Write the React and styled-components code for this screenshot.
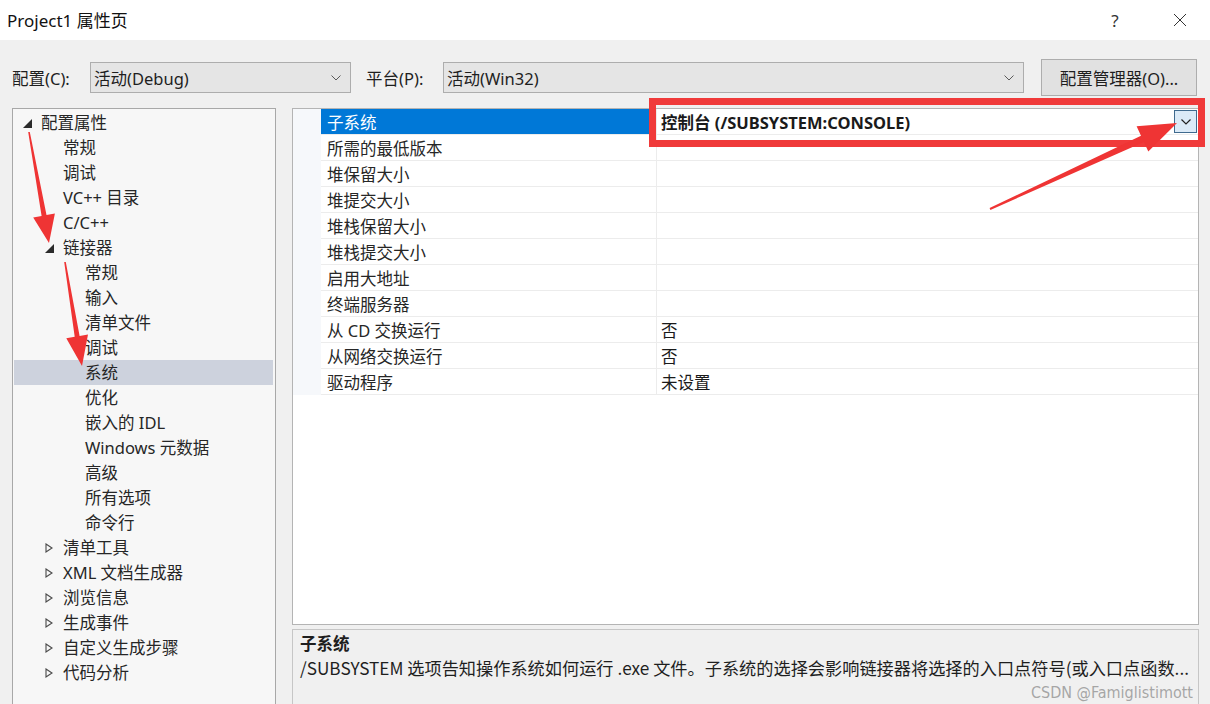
import React from 'react';
import styled, { createGlobalStyle } from 'styled-components';

const GlobalStyle = createGlobalStyle`
  html, body { margin: 0; padding: 0; background: #f0f0f0; }
  body {
    font-family: "Noto Sans", "Noto Sans CJK SC", sans-serif;
    color: #1e1e1e;
  }
  * { box-sizing: border-box; }
`;

const treeItems = [
  { label: '配置属性', level: 0, expander: 'open' },
  { label: '常规', level: 1 },
  { label: '调试', level: 1 },
  { label: 'VC++ 目录', level: 1 },
  { label: 'C/C++', level: 1 },
  { label: '链接器', level: 1, expander: 'open' },
  { label: '常规', level: 2 },
  { label: '输入', level: 2 },
  { label: '清单文件', level: 2 },
  { label: '调试', level: 2 },
  { label: '系统', level: 2, selected: true },
  { label: '优化', level: 2 },
  { label: '嵌入的 IDL', level: 2 },
  { label: 'Windows 元数据', level: 2 },
  { label: '高级', level: 2 },
  { label: '所有选项', level: 2 },
  { label: '命令行', level: 2 },
  { label: '清单工具', level: 1, expander: 'closed' },
  { label: 'XML 文档生成器', level: 1, expander: 'closed' },
  { label: '浏览信息', level: 1, expander: 'closed' },
  { label: '生成事件', level: 1, expander: 'closed' },
  { label: '自定义生成步骤', level: 1, expander: 'closed' },
  { label: '代码分析', level: 1, expander: 'closed' },
];

const props = [
  { name: '子系统', value: '控制台 (/SUBSYSTEM:CONSOLE)', selected: true },
  { name: '所需的最低版本', value: '' },
  { name: '堆保留大小', value: '' },
  { name: '堆提交大小', value: '' },
  { name: '堆栈保留大小', value: '' },
  { name: '堆栈提交大小', value: '' },
  { name: '启用大地址', value: '' },
  { name: '终端服务器', value: '' },
  { name: '从 CD 交换运行', value: '否' },
  { name: '从网络交换运行', value: '否' },
  { name: '驱动程序', value: '未设置' },
];

// red annotation arrows: tail -> tip
function arrowPoints([tx, ty], [px, py], headLen, headHalf, tailHalf, neckHalf) {
  const dx = px - tx, dy = py - ty;
  const len = Math.hypot(dx, dy);
  const ux = dx / len, uy = dy / len;
  const nx = -uy, ny = ux;
  const bx = px - ux * headLen, by = py - uy * headLen;
  const pts = [
    [tx + nx * tailHalf, ty + ny * tailHalf],
    [bx + nx * neckHalf, by + ny * neckHalf],
    [bx + nx * headHalf, by + ny * headHalf],
    [px, py],
    [bx - nx * headHalf, by - ny * headHalf],
    [bx - nx * neckHalf, by - ny * neckHalf],
    [tx - nx * tailHalf, ty - ny * tailHalf],
  ];
  return pts.map(p => p.map(v => v.toFixed(1)).join(',')).join(' ');
}

const arrows = [
  arrowPoints([29, 132], [49, 243], 28, 11, 0.8, 2.5),
  arrowPoints([65, 262], [82, 366], 30, 11, 0.8, 2.5),
  arrowPoints([990, 209], [1177, 123], 38, 14, 1, 3.5),
];

const Chevron = () => (
  <svg width="10" height="6" viewBox="0 0 10 6">
    <polyline points="0.5,0.5 5,5 9.5,0.5" fill="none" stroke="#5a5a5a" strokeWidth="1" />
  </svg>
);

const Expander = ({ kind }) => {
  if (kind === 'open') {
    return (
      <svg width="9" height="9" viewBox="0 0 9 9">
        <polygon points="9,0 9,9 0,9" fill="#2b2b2b" />
      </svg>
    );
  }
  if (kind === 'closed') {
    return (
      <svg width="8" height="10" viewBox="0 0 8 10">
        <polygon points="1,1 7,5 1,9" fill="none" stroke="#4a4a4a" strokeWidth="1.1" />
      </svg>
    );
  }
  return null;
};

export default function App() {
  return (
    <>
      <GlobalStyle />
      <Window>
        <TitleBar>
          <Title>Project1 属性页</Title>
          <Caption>
            <CapButton>?</CapButton>
            <CapButton>
              <svg width="14" height="14" viewBox="0 0 14 14">
                <path d="M1 1 L13 13 M13 1 L1 13" stroke="#333" strokeWidth="1" />
              </svg>
            </CapButton>
          </Caption>
        </TitleBar>

        <ConfigRow>
          <Label $w={78}>配置(C):</Label>
          <Combo $w={261}>
            <span>活动(Debug)</span>
            <Chevron />
          </Combo>
          <Label $w={77} $ml={15}>平台(P):</Label>
          <Combo $w={581}>
            <span>活动(Win32)</span>
            <Chevron />
          </Combo>
          <Button>配置管理器(O)...</Button>
        </ConfigRow>

        <Main>
          <TreePanel>
            {treeItems.map((it, i) => (
              <TreeRow key={i} $level={it.level} $selected={it.selected}>
                <ExpanderBox><Expander kind={it.expander} /></ExpanderBox>
                <span>{it.label}</span>
              </TreeRow>
            ))}
          </TreePanel>

          <RightColumn>
            <GridPanel>
              {props.map((p, i) => (
                <GridRow key={i}>
                  <Gutter />
                  <NameCell $selected={p.selected}>{p.name}</NameCell>
                  <ValueCell $selected={p.selected}>
                    <ValueText>{p.value}</ValueText>
                    {p.selected && (
                      <DropButton>
                        <svg width="10" height="6" viewBox="0 0 10 6">
                          <polyline points="0.5,0.5 5,5 9.5,0.5" fill="none" stroke="#222" strokeWidth="1.2" />
                        </svg>
                      </DropButton>
                    )}
                  </ValueCell>
                </GridRow>
              ))}
            </GridPanel>
            <DescPanel>
              <DescTitle>子系统</DescTitle>
              <DescText>/SUBSYSTEM 选项告知操作系统如何运行 .exe 文件。子系统的选择会影响链接器将选择的入口点符号(或入口点函数...</DescText>
            </DescPanel>
          </RightColumn>
        </Main>

        <Watermark>CSDN @Famiglistimott</Watermark>

        <Annotations viewBox="0 0 1210 704">
          <rect x="652.5" y="101.5" width="549" height="42" fill="none" stroke="#f03a3a" strokeWidth="7" />
          {arrows.map((pts, i) => (
            <polygon key={i} points={pts} fill="#ef3434" />
          ))}
        </Annotations>
      </Window>
    </>
  );
}

const Window = styled.div`
  position: relative;
  width: 1210px;
  height: 704px;
  overflow: hidden;
  background: #f0f0f0;
  display: flex;
  flex-direction: column;
`;

const TitleBar = styled.div`
  height: 40px;
  flex: none;
  background: #fff;
  display: flex;
  align-items: center;
  padding-left: 7px;
`;

const Title = styled.div`
  font-size: 17px;
  color: #111;
  margin-top: -2px;
`;

const Caption = styled.div`
  margin-left: auto;
  display: flex;
  gap: 19px;
  padding-right: 7px;
`;

const CapButton = styled.div`
  width: 46px;
  height: 40px;
  display: flex;
  align-items: center;
  justify-content: center;
  font-size: 17px;
  color: #333;
`;

const ConfigRow = styled.div`
  margin-top: 19px;
  height: 37px;
  flex: none;
  display: flex;
  align-items: center;
  padding-left: 12px;
  font-size: 16.5px;
`;

const Label = styled.div`
  width: ${p => p.$w}px;
  margin-left: ${p => p.$ml || 0}px;
  white-space: nowrap;
`;

const Combo = styled.div`
  width: ${p => p.$w}px;
  height: 31px;
  border: 1px solid #adadad;
  background: #e5e5e5;
  display: flex;
  align-items: center;
  justify-content: space-between;
  padding: 0 9px 0 3px;
`;

const Button = styled.div`
  margin-left: 17px;
  width: 156px;
  height: 37px;
  border: 1px solid #adadad;
  background: #e1e1e1;
  display: flex;
  align-items: center;
  justify-content: center;
  white-space: nowrap;
`;

const Main = styled.div`
  margin-top: 12px;
  display: flex;
  gap: 16px;
  padding: 0 11px 0 12px;
  flex: none;
`;

const TreePanel = styled.div`
  width: 264px;
  height: 620px;
  flex: none;
  border: 1px solid #a8a8a8;
  background: #f7f7f7;
  padding: 1px 2px 0 1px;
  font-size: 16.5px;
`;

const TreeRow = styled.div`
  height: 25px;
  line-height: 25px;
  display: flex;
  align-items: center;
  padding-left: ${p => 9 + p.$level * 22}px;
  background: ${p => (p.$selected ? '#cdd2dd' : 'transparent')};
  color: #262626;
  white-space: nowrap;
`;

const ExpanderBox = styled.span`
  width: 18px;
  flex: none;
  display: flex;
  align-items: center;
  padding-top: 1px;
`;

const RightColumn = styled.div`
  width: 907px;
  flex: none;
  display: flex;
  flex-direction: column;
  gap: 4px;
`;

const GridPanel = styled.div`
  height: 517px;
  border: 1px solid #b4b4b4;
  background: #fff;
  font-size: 16.5px;
`;

const GridRow = styled.div`
  display: grid;
  grid-template-columns: 28px 335px 1fr;
  height: 26px;
`;

const Gutter = styled.div`
  background: #f6f8fb;
`;

const NameCell = styled.div`
  padding: 2px 0 0 6px;
  line-height: 23px;
  border-bottom: 1px solid #ececec;
  background: ${p => (p.$selected ? '#0078d7' : 'transparent')};
  color: ${p => (p.$selected ? '#fff' : '#262626')};
  white-space: nowrap;
`;

const ValueCell = styled.div`
  display: flex;
  align-items: center;
  justify-content: space-between;
  padding-left: 4px;
  border-left: 1px solid #ececec;
  border-bottom: 1px solid #ececec;
  font-weight: ${p => (p.$selected ? 700 : 400)};
  color: #1a1a1a;
  white-space: nowrap;
`;

const ValueText = styled.span`
  padding-top: 3px;
  line-height: 22px;
`;

const DropButton = styled.div`
  width: 23px;
  height: 23px;
  margin-right: 1px;
  border: 1px solid #3f6a8e;
  background: #dbeaf7;
  display: flex;
  align-items: center;
  justify-content: center;
`;

const DescPanel = styled.div`
  height: 110px;
  border: 1px solid #c6c6c6;
  background: #f0f0f0;
  padding: 0 7px;
`;

const DescTitle = styled.div`
  font-family: "Noto Sans CJK SC", sans-serif;
  font-weight: 700;
  font-size: 16.5px;
  line-height: 26px;
`;

const DescText = styled.div`
  font-family: "Noto Sans CJK SC", sans-serif;
  font-size: 17.2px;
  line-height: 20px;
  margin-top: 2px;
  white-space: nowrap;
`;

const Watermark = styled.div`
  position: absolute;
  right: 17px;
  top: 687px;
  line-height: 12px;
  font-family: "Liberation Sans Narrow", "DejaVu Sans Condensed", sans-serif;
  font-size: 16px;
  color: rgba(140, 140, 140, 0.75);
  white-space: nowrap;
`;

const Annotations = styled.svg`
  position: absolute;
  left: 0;
  top: 0;
  width: 1210px;
  height: 704px;
  pointer-events: none;
`;
